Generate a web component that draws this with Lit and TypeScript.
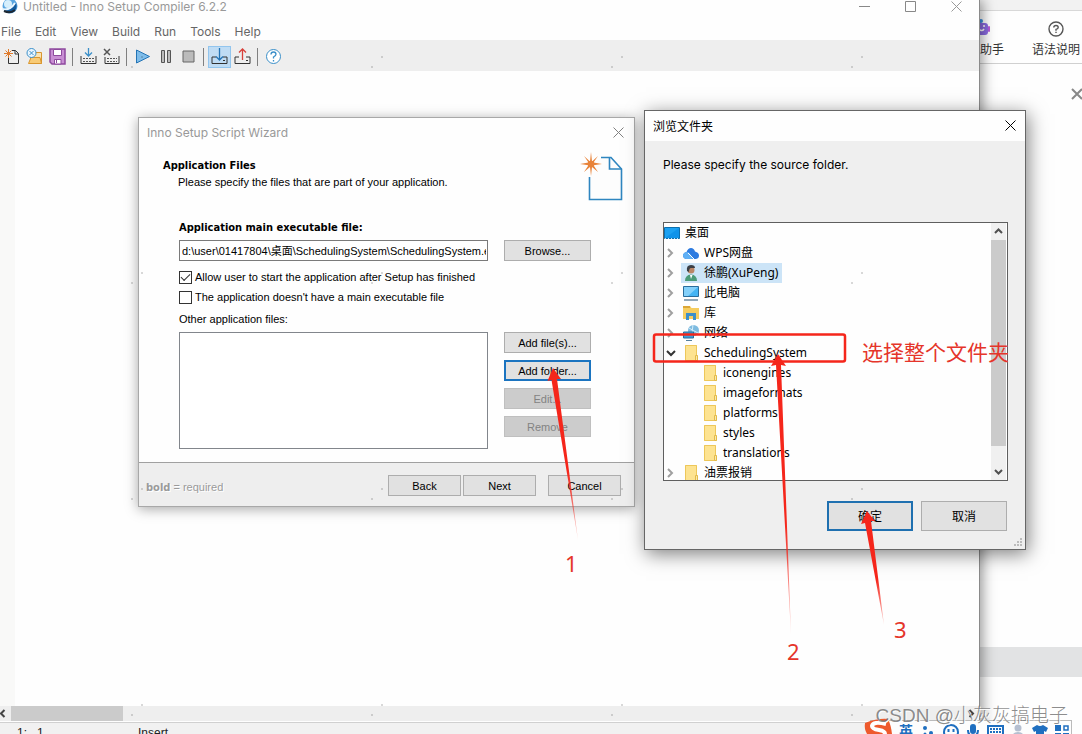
import { LitElement, html, css, svg } from "lit";
import { customElement } from "lit/decorators.js";
import { classMap } from "lit/directives/class-map.js";

const closeGlyph = html`<svg width="11" height="11" viewBox="0 0 11 11" fill="none" stroke="currentColor"><path d="M.5.5l10 10M10.5.5l-10 10" /></svg>`;

/* Main window of the script compiler */
@customElement("compiler-window")
class CompilerWindow extends LitElement {
  static styles = css`
    :host { display: flex; flex-direction: column; background: #fefefe; border-right: 1px solid #8a8a8a; box-shadow: 3px 0 12px rgba(0, 0, 0, 0.4); min-width: 0; }
    button { font: inherit; color: inherit; background: none; border: 0; padding: 0; display: grid; place-items: center; }
    .title { display: flex; align-items: center; height: 20px; padding: 0 17px 8px 2px; box-sizing: border-box; color: #999; }
    .title h1 { font: inherit; margin: 0; padding-left: 5px; flex: 1; }
    .title .wins { display: flex; gap: 35px; }
    .menu { display: flex; gap: 14px; height: 20px; padding: 2px 0 0 1px; box-sizing: border-box; align-items: center; color: #666; }
    .tools { display: flex; align-items: center; height: 31px; background: #eee; padding: 2px 0 0; box-sizing: border-box; }
    .tools button { width: 23px; height: 22px; }
    .tools button.on { background: #bfdcf4; outline: 1px solid #92c5ee; outline-offset: -1px; }
    .sep { width: 1px; height: 18px; background: #808080; margin: 0 4px 0 3px; }
    .editor { flex: 1; display: flex; }
    .gutter { width: 15px; background: #f9f9f8; }
    .hscroll { display: flex; align-items: center; height: 15px; background: #eee; color: #444; }
    .hscroll .thumb { width: 112px; height: 15px; background: #cbcbcb; margin-left: 4px; }
    .hscroll .next { margin-left: auto; padding-right: 4px; }
    .status { display: flex; height: 12px; margin-top: 1px; border-top: 1px solid #d0d0d0; box-sizing: border-box; background: #f1f1f1; overflow: hidden; padding: 3px 0 0 17px; white-space: pre; color: #222; line-height: 14px; font-family: "Liberation Sans", sans-serif; }
    .status span:first-child { width: 121px; }
  `;
  render() {
    return html`
      <header class="title">
        <svg width="16" height="16" viewBox="0 0 16 16"><circle cx="8" cy="8" r="7.5" fill="#5aa5e0" /><circle cx="6" cy="6" r="4" fill="#d6effc" /><path d="M1 11q7 2 13-6 2 6-3 9-6 3-10-3" fill="#135a9c" /><path d="M0 11q8 2 13-6" fill="none" stroke="#e8f6ff" stroke-width="2" /><path d="M2 13q6 3 11-1" fill="none" stroke="#1c2733" stroke-width="2" /></svg>
        <h1>Untitled - Inno Setup Compiler 6.2.2</h1>
        <div class="wins">
          <button aria-label="Minimize"><svg width="11" height="11" stroke="#888"><path d="M0 5.5h11" /></svg></button>
          <button aria-label="Maximize"><svg width="11" height="11" stroke="#888" fill="none"><path d="M.5.5h10v10H.5z" /></svg></button>
          <button aria-label="Close">${closeGlyph}</button>
        </div>
      </header>
      <nav class="menu">${["File", "Edit", "View", "Build", "Run", "Tools", "Help"].map((m) => html`<button>${m}</button>`)}</nav>
      <div class="tools">
        <button aria-label="New"><svg width="17" height="17" viewBox="0 0 17 17" fill="none"><path d="M9 2.5h3.500l3 3V15.500H5.500V9" stroke="#333" /><path d="M12 2.500v3.500h3.500" stroke="#333" /><path d="M5.500 1v9M1 5.500h9M2.500 2.500l6 6M8.500 2.500l-6 6" stroke="#e07b2c" /></svg></button>
        <button aria-label="Open"><svg width="17" height="17" viewBox="0 0 17 17" fill="none"><path d="M5 7V15.500h10.500V4.500H10" fill="#fbe3b0" stroke="#d9962e" /><path d="M2.500 15.500l2.500-6h9l1.500 6z" fill="#f8cb76" stroke="#d9962e" /><circle cx="5.500" cy="5" r="4.500" fill="#e9f5fd" stroke="#3a8fc9" /><path d="M3.500 3l4 4M7.500 3l-4 4" stroke="#3a8fc9" /></svg></button>
        <button aria-label="Save"><svg width="17" height="17" viewBox="0 0 17 17" fill="none" stroke="#8e4a9e"><path d="M1 1h15v15H3l-2-2z" fill="#c98fd4" stroke-width="1.500" /><path d="M4.500 1.500h8v6h-8z" fill="#fff" /><path d="M5.500 11.500h6.500v4.500H5.500z" fill="#fff" /><path d="M7.500 12v3" /></svg></button>
        <i class="sep"></i>
        <button aria-label="Compile"><svg width="17" height="17" viewBox="0 0 17 17" fill="none"><path d="M1 8v7.500h15V8" stroke="#333" /><path d="M3 10.500h11M3 13.500h11" stroke="#555" stroke-dasharray="2 1" /><path d="M8.500 0v7.500M5 4.500l3.500 3.500 3.500-3.500" stroke="#3a8fc9" stroke-width="1.300" /></svg></button>
        <button aria-label="Stop compile"><svg width="17" height="17" viewBox="0 0 17 17" fill="none"><path d="M2 9v6.500h14V8" stroke="#333" /><path d="M4 10.500h10M4 13.500h10" stroke="#555" stroke-dasharray="2 1" /><path d="M1 1l6 6M7 1L1 7" stroke="#555" stroke-width="1.500" /></svg></button>
        <i class="sep"></i>
        <button aria-label="Run"><svg width="17" height="17" viewBox="0 0 17 17"><path d="M2.500 2l13 6.500-13 6.500z" fill="#7fbdea" stroke="#2474b5" /></svg></button>
        <button aria-label="Pause"><svg width="17" height="17" viewBox="0 0 17 17" fill="#bbb" stroke="#555"><path d="M4.500 2.500h3v12h-3zM10.500 2.500h3v12h-3z" /></svg></button>
        <button aria-label="Stop"><svg width="17" height="17" viewBox="0 0 17 17" fill="#bbb" stroke="#666"><path d="M3 3h11v11H3z" /></svg></button>
        <i class="sep"></i>
        <button class="on" aria-label="Target setup"><svg width="17" height="17" viewBox="0 0 17 17" fill="none"><path d="M5 9H1v6.500h15V9h-4" stroke="#333" /><path d="M12 12.500h2" stroke="#333" /><path d="M8.500 0v12M5 8.500l3.500 3.500 3.500-3.500" stroke="#2474b5" stroke-width="1.300" /></svg></button>
        <button aria-label="Target uninstall"><svg width="17" height="17" viewBox="0 0 17 17" fill="none"><path d="M5 9H1v6.500h15V9h-4" stroke="#333" /><path d="M12 12.500h2" stroke="#333" /><path d="M8.500 12V1M5 4.500L8.500 1 12 4.500" stroke="#d8403a" stroke-width="1.300" /></svg></button>
        <i class="sep"></i>
        <button aria-label="Help"><svg width="17" height="17" viewBox="0 0 17 17" fill="none" stroke="#3a8fc9"><circle cx="8.500" cy="8.500" r="7" fill="#fff" /><path d="M6 6.500q0-2.500 2.500-2.500t2.500 2.300q0 1.500-2.500 2.700v1.500M8.500 12v1.500" stroke-width="1.300" /></svg></button>
      </div>
      <main class="editor"><div class="gutter"></div></main>
      <div class="hscroll">
        <svg width="7" height="9" viewBox="0 0 7 9" fill="none" stroke="currentColor" stroke-width="2"><path d="M4.500 1L1 4.500 4.500 8" /></svg>
        <div class="thumb"></div>
        <svg class="next" width="7" height="9" viewBox="0 0 7 9" fill="none" stroke="currentColor" stroke-width="2"><path d="M1.500 1L5 4.500 1.500 8" /></svg>
      </div>
      <footer class="status"><span>1:   1</span><span>Insert</span></footer>
    `;
  }
}

/* Browser page seen behind the compiler */
@customElement("side-page")
class SidePage extends LitElement {
  static styles = css`
    :host { display: flex; flex-direction: column; background: #fefefe; overflow: hidden; font-family: "Noto Sans CJK SC", sans-serif; }
    .strip { height: 10px; background: #f2f2f2; border-bottom: 1px solid #d8d8d8; }
    .bar { display: flex; justify-content: space-between; height: 52px; border-bottom: 1px solid #d0d0d0; white-space: nowrap; color: #333; }
    .bar button { display: flex; flex-direction: column; border: 0; background: none; padding: 8px 0 0; font: inherit; color: inherit; line-height: 18px; gap: 3px; }
    .bar svg { display: block; }
    .help { align-items: center; margin-right: 2px; }
    .shut { align-self: flex-end; border: 0; background: none; padding: 0; height: 60px; width: 11px; overflow: hidden; color: #888; }
    .shut svg { display: block; }
    .gap { flex: 1; }
    .band { height: 30px; background: #e2e3e4; margin-bottom: 57px; }
  `;
  render() {
    return html`
      <div class="strip"></div>
      <div class="bar">
        <button><svg width="12" height="18" viewBox="0 0 12 18"><rect x="-8" y="4" width="16" height="12" rx="3" fill="#8a6be0" /><rect x="8" y="7" width="2" height="6" rx="1" fill="#b45bd8" /><circle cx="1" cy="2" r="2" fill="#3f8fe0" /><path d="M-1 10q3 3 5 0M4 6v2" fill="none" stroke="#fff" stroke-width="1.500" /></svg>助手</button>
        <button class="help"><svg width="18" height="18" viewBox="0 0 18 18" fill="none" stroke="#555" stroke-width="1.400"><circle cx="9" cy="10" r="7" /><path d="M6.800 8.500q0-2 2.200-2t2.200 1.900q0 1.200-2.200 2v1.400M9 12.700v1.300" /></svg>语法说明</button>
      </div>
      <button class="shut" aria-label="Close panel"><svg width="12" height="12" viewBox="0 0 12 12" stroke="currentColor" stroke-width="2"><path d="M1 1l10 10M11 1L1 11" /></svg></button>
      <div class="gap"></div>
      <div class="band"></div>
    `;
  }
}

/* Script wizard, "Application Files" step */
@customElement("script-wizard")
class ScriptWizard extends LitElement {
  static styles = css`
    :host { display: block; width: 497px; box-sizing: border-box; background: #fefefe; border: 1px solid #a8a8a8; box-shadow: 0 2px 12px rgba(0, 0, 0, 0.35); font: 11px/14px "Liberation Sans", "Noto Sans CJK SC", sans-serif; color: #000; }
    .bold { font: bold 11px/14px "DejaVu Sans Condensed", sans-serif; margin: 0; }
    .title { display: flex; justify-content: space-between; align-items: center; height: 29px; padding: 0 10px 0 8px; font: 12px Inter, sans-serif; color: #999; }
    .title button { border: 0; background: none; padding: 0; color: #808080; display: grid; }
    .head { display: flex; justify-content: space-between; padding: 5px 11px 0 24px; }
    .head p { margin: 2px 0 0 15px; }
    .head h2 { padding-top: 7px; }
    .body { display: grid; grid-template-columns: 1fr 87px; column-gap: 16px; padding: 20px 43px 13px 40px; }
    .full { grid-column: 1 / -1; }
    input[type="text"] { box-sizing: border-box; width: 100%; height: 21px; margin: 0; padding: 0 1px 1px 2px; border: 1px solid #7a7a7a; background: #fff; font: inherit; color: #000; border-radius: 0; }
    .main { display: block; padding-bottom: 5px; }
    .check { display: flex; align-items: center; gap: 3px; height: 20px; }
    .checks { padding: 6px 0 5px; }
    .check input { appearance: none; box-sizing: border-box; width: 13px; height: 13px; border: 1px solid #333; margin: 0; background: #fff; display: grid; place-items: center; }
    .check input:checked::before { content: ""; width: 8px; height: 4px; border: solid #333; border-width: 0 0 1px 1px; transform: rotate(-45deg) translate(1px, -1px); }
    .list { box-sizing: border-box; height: 117px; border: 1px solid #82868c; background: #fff; margin-top: 1px; }
    .side { display: flex; flex-direction: column; gap: 7px; margin-top: 1px; }
    .btn { box-sizing: border-box; height: 21px; border: 1px solid #adadad; background: #e1e1e1; font: inherit; color: #000; padding: 0; }
    .btn.focus { border: 2px solid #1b74c0; }
    .btn:disabled { background: #ccc; border-color: #bfbfbf; color: #838383; }
    .foot { display: flex; align-items: center; border-top: 1px solid #a0a0a0; background: #eee; padding: 12px 13px 10px 7px; color: #9a9a9a; text-shadow: 1px 1px #fff; }
    .foot p { margin: 0; flex: 1; padding-top: 3px; }
    .foot .btn { width: 73px; margin-left: 2px; text-shadow: none; }
    .foot .cancel { margin-left: 12px; }
  `;
  render() {
    return html`
      <header class="title"><span>Inno Setup Script Wizard</span><button aria-label="Close">${closeGlyph}</button></header>
      <div class="head">
        <div><h2 class="bold">Application Files</h2><p>Please specify the files that are part of your application.</p></div>
        <svg width="43" height="49" viewBox="0 0 43 49" fill="none"><path d="M21 5.500h10L41.500 17V47.500H9.500V25" stroke="#2f86c0" stroke-width="1.600" fill="#fdfdfd" /><path d="M29.500 5.500V17H41.500" stroke="#2f86c0" stroke-width="1.600" /><path d="M11 0l1 9.500 6-5.500-4.500 6.500L22 12l-8.500 1.200L18 20l-6-5-1 9-1-9-6 5 4.500-6.800L0 12l8.500-1.500L4 4l6 5.500z" fill="#e8833a" /><circle cx="11" cy="12" r="3.300" fill="#e8833a" /></svg>
      </div>
      <div class="body">
        <label class="full main bold" for="exe">Application main executable file:</label>
        <input id="exe" type="text" value="d:\\user\\01417804\\桌面\\SchedulingSystem\\SchedulingSystem.exe" />
        <button class="btn">Browse...</button>
        <div class="full checks">
          <label class="check"><input type="checkbox" checked />Allow user to start the application after Setup has finished</label>
          <label class="check"><input type="checkbox" />The application doesn't have a main executable file</label>
        </div>
        <label class="full main" id="other">Other application files:</label>
        <div class="list" role="listbox" aria-labelledby="other"></div>
        <div class="side">
          <button class="btn">Add file(s)...</button>
          <button class="btn focus">Add folder...</button>
          <button class="btn" disabled>Edit...</button>
          <button class="btn" disabled>Remove</button>
        </div>
      </div>
      <footer class="foot"><p><span class="bold">bold</span> = required</p><button class="btn">Back</button><button class="btn">Next</button><button class="btn cancel">Cancel</button></footer>
    `;
  }
}

const icons: Record<string, unknown> = {
  folder: svg`<path d="M2 0h12v10l1 1v5H2z" fill="#fbdf84"/><path d="M2.500 .5h11v15h-11z" fill="#fde391" stroke="#edc75a"/><path d="M12.500 10.500h2v5h-2z" fill="#fbe9a8" stroke="#e2ba4b"/>`,
  desktop: svg`<path d="M.5 2.500h15v11H.5z" fill="#1ba1f2" stroke="#0b6fae"/><path d="M1 13L15 3v10z" fill="#0e93ea"/><path d="M1 13.500h14" stroke="#bfe4fb" stroke-dasharray="1 2"/>`,
  cloud: svg`<path d="M3 14q-3-1-3-3.500T3.500 7Q5 3 8 3q3 0 4 3.500 4 1 4 4T13 14z" fill="#2d7be0"/><path d="M0 10q1-3 4-3 3 0 6 7H3q-3-1-3-4" fill="#5fb0f5"/><path d="M5 8l6 6" stroke="#fff"/>`,
  user: svg`<path d="M2 16q0-6 6-6.500 6 .5 6 6.500z" fill="#4b9b78"/><circle cx="8" cy="5" r="3.500" fill="#b98566"/><path d="M4 6q-1-6 4-6 4 0 4 3l-4 0q-2 0-2 4z" fill="#3b3f45"/><path d="M7 10l1 4 1.500-4z" fill="#fff"/>`,
  pc: svg`<path d="M.5 1.500h15v10H.5z" fill="#44b4f4" stroke="#2a6d9c"/><path d="M1 2h14L5 11H1z" fill="#83d0fa"/><path d="M1 15h14" stroke="#6c8ba2" stroke-width="1.500"/>`,
  library: svg`<path d="M0 1h7l1.500 2H16v11H0z" fill="#f6cd5f"/><path d="M0 1h7v2H0z" fill="#dba637"/><path d="M3 15V8h10v7h-3v-4H6v4z" fill="#3c8fca"/>`,
  network: svg`<circle cx="10.500" cy="5.500" r="5.500" fill="#7ebbe0"/><path d="M6 3q5 3 9 5M10 0q-2 6 1 10" stroke="#d7eefa" fill="none"/><path d="M.5 7h10v6H.5z" fill="#3fa0dc" stroke="#2a6d9c"/><path d="M3 15.500h6" stroke="#557f9c"/>`,
};

interface Node { label: string; icon: string; level: 0 | 1 | 2; open?: boolean; selected?: boolean; }
const nodes: Node[] = [
  { label: "桌面", icon: "desktop", level: 0 },
  { label: "WPS网盘", icon: "cloud", level: 1 },
  { label: "徐鹏(XuPeng)", icon: "user", level: 1, selected: true },
  { label: "此电脑", icon: "pc", level: 1 },
  { label: "库", icon: "library", level: 1 },
  { label: "网络", icon: "network", level: 1 },
  { label: "SchedulingSystem", icon: "folder", level: 1, open: true },
  { label: "iconengines", icon: "folder", level: 2 },
  { label: "imageformats", icon: "folder", level: 2 },
  { label: "platforms", icon: "folder", level: 2 },
  { label: "styles", icon: "folder", level: 2 },
  { label: "translations", icon: "folder", level: 2 },
  { label: "油票报销", icon: "folder", level: 1 },
];

/* Folder picker */
@customElement("folder-dialog")
class FolderDialog extends LitElement {
  static styles = css`
    :host { display: block; width: 382px; box-sizing: border-box; background: #efefef; border: 1px solid #666; box-shadow: 2px 4px 18px rgba(0, 0, 0, 0.5); color: #000; }
    .title { display: flex; justify-content: space-between; align-items: center; height: 30px; padding: 0 9px 2px 8px; box-sizing: border-box; background: #fefefe; }
    .title button { border: 0; background: none; padding: 0; color: #000; display: grid; }
    .msg { margin: 0; padding: 15px 18px 49px; line-height: 17px; }
    .tree { display: flex; height: 257px; margin: 0 17px 0 18px; border: 1px solid #5f5f5f; background: #fefefe; }
    .nodes { flex: 1; overflow: hidden; margin: 0; padding: 0; list-style: none; font-family: "Noto Sans", "Noto Sans CJK SC", sans-serif; }
    .node { display: flex; align-items: center; height: 20px; }
    .tw { width: 19px; display: flex; padding-left: 3px; box-sizing: border-box; color: #a0a0a0; }
    .tw.open { color: #333; padding-left: 2px; }
    .l2 { padding-left: 38px; }
    .label { padding-right: 4px; line-height: 20px; display: flex; align-items: center; gap: 5px; }
    .selected .label { background: #cce4f7; margin-left: -2px; padding-left: 2px; }
    .scroll { width: 15px; display: flex; flex-direction: column; align-items: center; background: #f0f0f0; margin-right: 1px; color: #505050; }
    .scroll svg { padding: 4px 0; }
    .thumb { width: 15px; height: 206px; background: #cbcbcb; }
    .down { margin-top: auto; }
    .actions { display: flex; justify-content: flex-end; gap: 8px; padding: 20px 18px 7px; }
    .actions button { box-sizing: border-box; width: 86px; height: 30px; border: 1px solid #adadad; background: #e1e1e1; font: inherit; color: #000; padding: 0 0 2px; }
    .actions .ok { border: 2px solid #1f70b0; }
    .grip { display: block; margin: 0 2px 2px auto; }
  `;
  render() {
    return html`
      <header class="title"><span>浏览文件夹</span><button aria-label="Close">${closeGlyph}</button></header>
      <p class="msg">Please specify the source folder.</p>
      <div class="tree">
        <ul class="nodes" role="tree">
          ${nodes.map((n) => html`
            <li role="treeitem" class=${classMap({ node: true, l2: n.level === 2, selected: !!n.selected })}>
              ${n.level === 1 ? html`<span class=${classMap({ tw: true, open: !!n.open })}>${n.open
                ? html`<svg width="10" height="10" viewBox="0 0 10 10" fill="none" stroke="currentColor" stroke-width="2"><path d="M1 3l4 4 4-4" /></svg>`
                : html`<svg width="8" height="10" viewBox="0 0 8 10" fill="none" stroke="currentColor" stroke-width="2"><path d="M1 1l4 4-4 4" /></svg>`}</span>` : ""}
              <span class="label"><svg width="16" height="16" viewBox="0 0 16 16">${icons[n.icon]}</svg>${n.label}</span>
            </li>`)}
        </ul>
        <div class="scroll">
          <svg width="9" height="9" viewBox="0 0 9 9" fill="none" stroke="currentColor" stroke-width="2"><path d="M1 6l3.500-3.500L8 6" /></svg>
          <div class="thumb"></div>
          <svg class="down" width="9" height="9" viewBox="0 0 9 9" fill="none" stroke="currentColor" stroke-width="2"><path d="M1 3l3.500 3.500L8 3" /></svg>
        </div>
      </div>
      <footer class="actions"><button class="ok">确定</button><button>取消</button></footer>
      <svg class="grip" width="9" height="9" fill="#bcbcbc"><path d="M6 0h2v2H6zM3 3h2v2H3zM6 3h2v2H6zM0 6h2v2H0zM3 6h2v2H3zM6 6h2v2H6z" /></svg>
    `;
  }
}

/* Input method toolbar at the bottom of the desktop */
@customElement("ime-bar")
class ImeBar extends LitElement {
  static styles = css`
    :host { display: flex; align-items: flex-start; gap: 7px; box-sizing: border-box; width: 202px; height: 14px; overflow: hidden; border: solid #bbb; border-width: 1px 1px 0 0; background: #fdfdfd; color: #1f6fc0; padding-left: 28px; }
    svg { flex: none; margin-top: 3px; }
    b { flex: none; width: 16px; font: bold 14px/18px "Noto Sans CJK SC", sans-serif; text-align: center; }
  `;
  render() {
    return html`
      <b>英</b>
      <svg width="15" height="16" fill="currentColor"><circle cx="4" cy="4" r="2" /><circle cx="10" cy="9" r="2" /><circle cx="4" cy="10" r="1.500" /></svg>
      <svg width="16" height="16" fill="none" stroke="currentColor" stroke-width="2"><circle cx="8" cy="8" r="7" /><path d="M5.500 5v3M10.500 5v3M5 11q3 2 6 0" /></svg>
      <svg width="14" height="16" fill="none" stroke="currentColor" stroke-width="2"><rect x="5" y="1" width="4" height="8" rx="2" fill="currentColor" /><path d="M2 6q0 6 5 6t5-6M7 12v4" /></svg>
      <svg width="17" height="16" fill="none" stroke="currentColor" stroke-width="2"><path d="M1 2h15v11H1z" /><path d="M3 5h11M3 8h11" stroke-dasharray="2 1" /></svg>
      <svg width="14" height="16" fill="#b5bfd0"><circle cx="7" cy="4" r="3.500" /><path d="M1 14q0-6 6-6t6 6z" /></svg>
      <svg width="16" height="16" fill="currentColor"><path d="M5 1q3 2 6 0l5 3-2 4-2-1v8H4V7L2 8 0 4z" /></svg>
      <svg width="15" height="16" fill="currentColor"><path d="M0 1h6v6H0zM0 9h6v6H0zM8 9h6v6H8z" /><path d="M9 2h4v4H9z" fill="none" stroke="currentColor" stroke-width="1.500" /></svg>
    `;
  }
}

@customElement("app-root")
class AppRoot extends LitElement {
  static styles = css`
    :host { display: grid; grid-template-columns: 1fr 102px; height: 100vh; position: relative; overflow: hidden; font: 12px Inter, "Noto Sans CJK SC", sans-serif; }
    compiler-window { position: relative; z-index: 1; }
    script-wizard, folder-dialog, ime-bar, .logo, .mark, .ink, .note { position: absolute; z-index: 2; }
    script-wizard { left: 138px; top: 117px; }
    folder-dialog { left: 644px; top: 110px; }
    ime-bar { right: 10px; bottom: 0; }
    .logo { right: 190px; bottom: 0; }
    .mark { right: 14px; bottom: 4px; font: 19px/28px "Liberation Sans", "Noto Sans CJK SC", sans-serif; font-weight: 300; color: rgba(110, 110, 110, 0.8); text-shadow: 1px 1px #fff; white-space: nowrap; }
    .ink { left: 0; top: 0; width: 100%; height: 100%; pointer-events: none; }
    .note { color: #e5352a; font: 22px/30px "Noto Sans", "Noto Sans CJK SC", sans-serif; white-space: nowrap; }
    .n1 { left: 565px; top: 548px; }
    .n2 { left: 787px; top: 636px; }
    .n3 { left: 894px; top: 614px; }
    .nt { left: 862px; top: 337px; font-size: 21px; }
  `;
  render() {
    return html`
      <compiler-window></compiler-window>
      <side-page></side-page>
      <script-wizard></script-wizard>
      <folder-dialog></folder-dialog>
      <ime-bar></ime-bar>
      <svg class="logo" width="28" height="16" viewBox="0 0 28 16"><path d="M1 5Q14 0 24 1q3 6 4 15H3Q0 11 1 5" fill="#ee5a2d" /><path d="M22 6Q9 3 8 8q0 3 7 4 6 1 6 4" fill="none" stroke="#fff" stroke-width="4" /></svg>
      <svg class="ink">
        <defs>
          <pattern id="dots" x="131" y="56" width="240" height="216" patternUnits="userSpaceOnUse"><path d="M0 10h2v2H0zM10 0h2v2h-2z" fill="#000" opacity=".15" /></pattern>
          <linearGradient id="fade" x1="0" y1="0" x2="0" y2="1"><stop offset="0.600" stop-color="#f5261b" /><stop offset="1" stop-color="#f5261b" stop-opacity="0.200" /></linearGradient>
        </defs>
        <rect width="100%" height="100%" fill="url(#dots)" />
        <rect x="654" y="334.500" width="191" height="27" rx="2" fill="none" stroke="#f5261b" stroke-width="2.500" />
        <g fill="url(#fade)">
          <path d="M553 368l8 11-4 0L578 540 551.500 380l-4 1z" />
          <path d="M778 354l8 12-5-1L791 634 776 365l-5 1z" />
          <path d="M867 511l8 10-4 0L884 625 865 523l-4 1z" />
        </g>
      </svg>
      <span class="note n1">1</span>
      <span class="note n2">2</span>
      <span class="note n3">3</span>
      <span class="note nt">选择整个文件夹</span>
      <span class="mark">CSDN @小灰灰搞电子</span>
    `;
  }
}
